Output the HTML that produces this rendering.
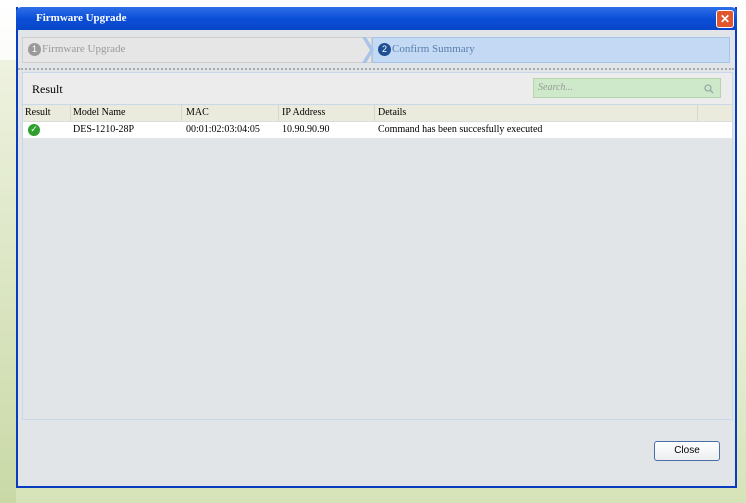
<!DOCTYPE html><html><head><style>
body{margin:0;width:746px;height:503px;overflow:hidden;background:linear-gradient(180deg,#fff 0%,#f3f6ea 40%,#d6e3b8 100%);font-family:"Liberation Serif",serif;position:relative}
.win{position:absolute;left:16px;top:7px;width:721px;height:481px;background:#e2e5e8;border:2px solid #0a3cc0;border-top:0;box-sizing:border-box}
.tb{position:absolute;left:16px;top:7px;width:721px;height:23px;background:linear-gradient(#2f6fe8,#0b4fd8 50%,#0846c8);border-radius:6px 6px 0 0}
.tb span{position:absolute;left:20px;top:5px;color:#fff;font-weight:bold;font-size:11px}
.x{position:absolute;right:3px;top:3px;width:16px;height:16px;background:#e0562e;border:1px solid #fff;border-radius:3px;color:#fff;font:bold 12px/16px "Liberation Sans";text-align:center}
.step1{position:absolute;left:22px;top:37px;width:350px;height:26px;background:#e6e6e6;border:1px solid #cfcfcf;box-sizing:border-box;color:#9a9a9a;font-size:11px}
.step2{position:absolute;left:372px;top:37px;width:358px;height:26px;background:#c4d9f3;border:1px solid #a9c4e8;box-sizing:border-box;color:#5a7fb0;font-size:11px}
.n{display:inline-block;width:13px;height:13px;border-radius:50%;color:#fff;font:9px/13px "Liberation Sans";text-align:center;vertical-align:middle;margin:0 1px 0 5px}
.dots{position:absolute;left:18px;top:68px;width:716px;border-top:2px dotted #aaa}
.panel{position:absolute;left:22px;top:72px;width:711px;height:348px;border:1px solid #c8d8ea;box-sizing:border-box;background:#e2e5e8}
.rh{position:absolute;left:0;top:0;width:100%;height:31px;background:#ececec;border-bottom:1px solid #c8d8ea;font-size:12px}
.search{position:absolute;left:510px;top:5px;width:188px;height:20px;background:#cde9c9;border:1px solid #b8d4ac;box-sizing:border-box;font-style:italic;color:#999;font-size:10px;padding:3px 4px}
.th{position:absolute;left:0;top:32px;width:100%;height:16px;background:#ebebdd;border-bottom:1px solid #ddd;font-size:10px}
.tr{position:absolute;left:0;top:49px;width:100%;height:16px;background:#fff;font-size:10px}
.c{position:absolute;top:2px}
.btn{position:absolute;left:654px;top:441px;width:66px;height:20px;border:1px solid #4a6fa8;border-radius:3px;background:linear-gradient(#fff,#eceef0);box-sizing:border-box;font:10px/18px "Liberation Sans Narrow","Liberation Sans";text-align:center}
</style></head><body>
<div style="position:absolute;left:0;top:60px;width:16px;height:443px;background:linear-gradient(#eef2e0,#c9d9a6)"></div>
<div class="win"></div>
<div class="tb"><span>Firmware Upgrade</span><div class="x">✕</div></div>
<div class="step1"><div style="margin-top:5px"><span class="n" style="background:#9a9a9a">1</span>Firmware Upgrade</div></div>
<div class="step2"><div style="margin-top:5px"><span class="n" style="background:#1f4f94">2</span>Confirm Summary</div></div>
<svg style="position:absolute;left:362px;top:37px" width="12" height="26"><polygon points="0,0 4,0 12,13 4,26 0,26 8,13" fill="#a9c4e8"/></svg>
<div class="dots"></div>
<div class="panel">
<div class="rh"><span style="position:absolute;left:9px;top:9px">Result</span><div class="search">Search...<svg style="position:absolute;right:6px;top:5px" width="10" height="10"><circle cx="4" cy="4" r="3" fill="none" stroke="#9aa" stroke-width="1.3"/><line x1="6" y1="6" x2="9" y2="9" stroke="#9aa" stroke-width="1.5"/></svg></div></div>
<div class="th"><span class="c" style="left:2px">Result</span><span class="c" style="left:50px">Model Name</span><span class="c" style="left:163px">MAC</span><span class="c" style="left:259px">IP Address</span><span class="c" style="left:355px">Details</span>
<div style="position:absolute;left:47px;top:0;height:16px;border-left:1px solid #d8d8c8"></div><div style="position:absolute;left:158px;top:0;height:16px;border-left:1px solid #d8d8c8"></div><div style="position:absolute;left:255px;top:0;height:16px;border-left:1px solid #d8d8c8"></div><div style="position:absolute;left:351px;top:0;height:16px;border-left:1px solid #d8d8c8"></div><div style="position:absolute;left:674px;top:0;height:16px;border-left:1px solid #d8d8c8"></div></div>
<div class="tr"><span style="position:absolute;left:5px;top:2px;width:12px;height:12px;border-radius:50%;background:#2ea02e;color:#fff;font:bold 9px/12px 'DejaVu Sans';text-align:center">✓</span><span class="c" style="left:50px">DES-1210-28P</span><span class="c" style="left:163px">00:01:02:03:04:05</span><span class="c" style="left:259px">10.90.90.90</span><span class="c" style="left:355px">Command has been succesfully executed</span></div>
</div>
<div class="btn">Close</div>
</body></html>
